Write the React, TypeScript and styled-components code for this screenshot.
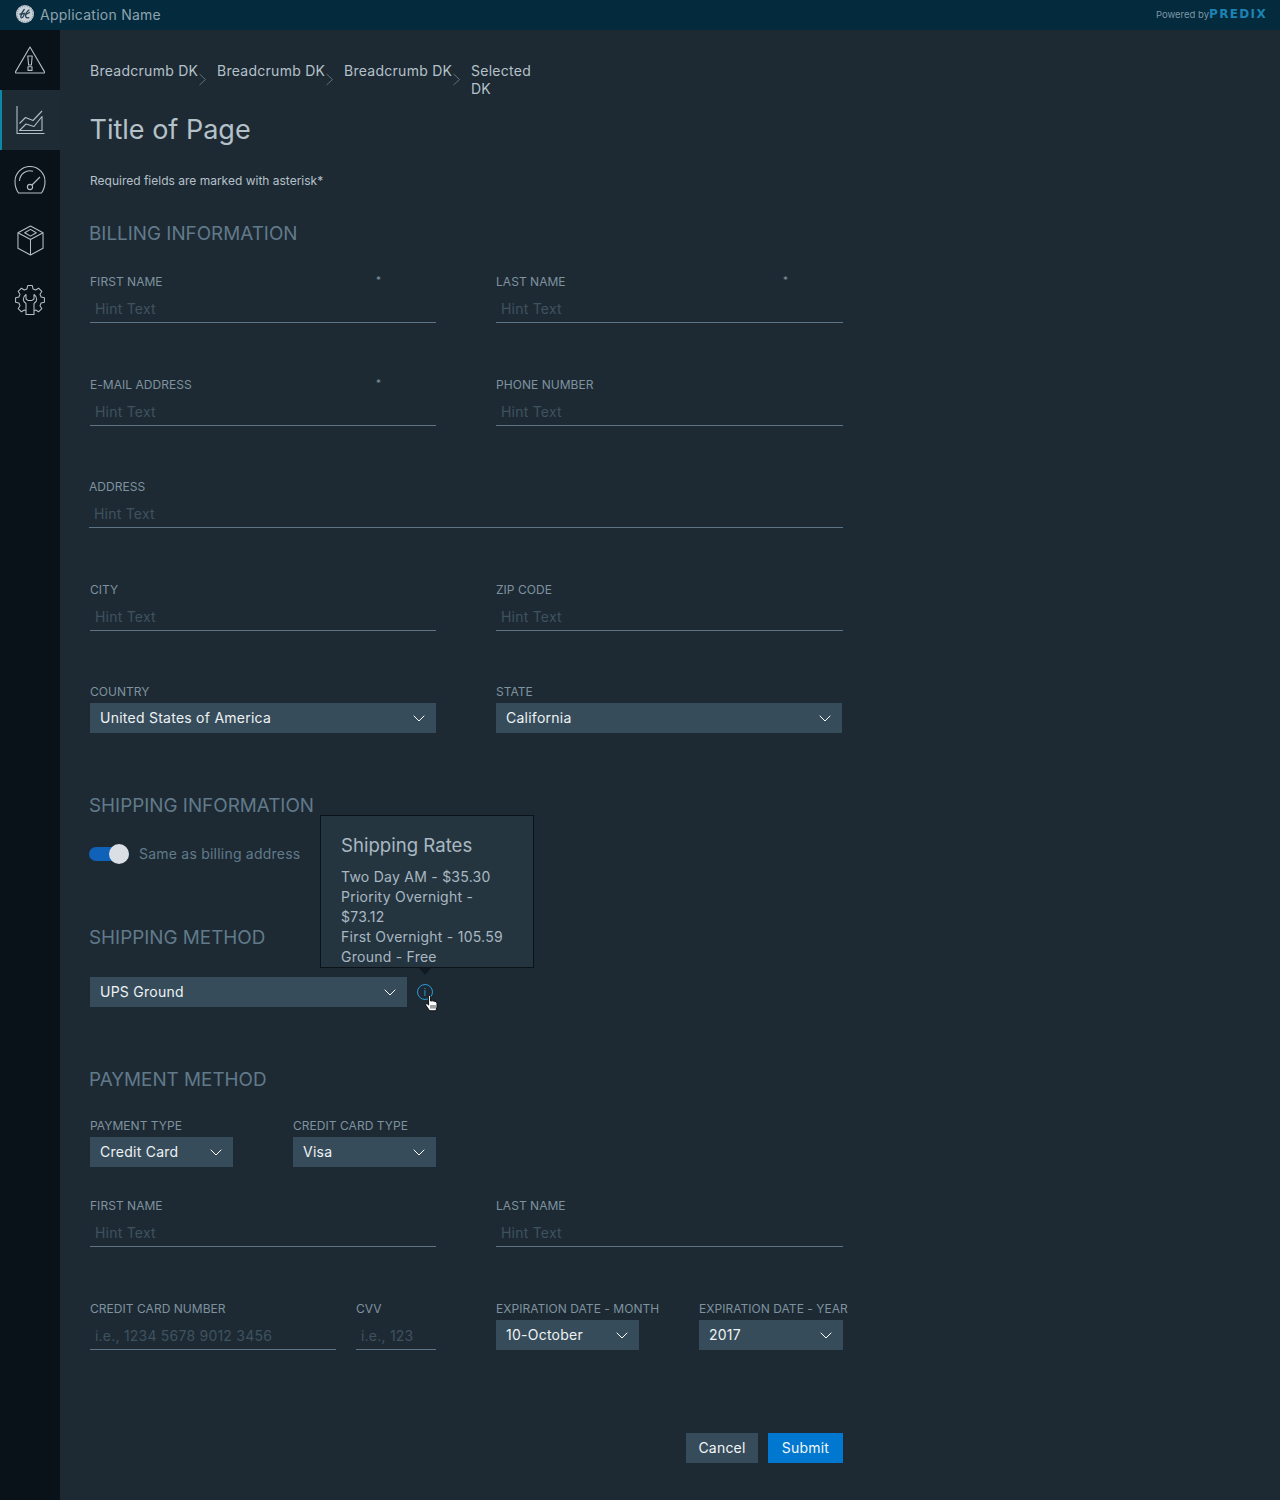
import { FC } from "react";
import styled, { createGlobalStyle } from "styled-components";

const GlobalStyle = createGlobalStyle`
  * { box-sizing: border-box; }
  html, body { margin: 0; padding: 0; background: #1d2a34; }
  body { font-family: "Inter", "Liberation Sans", sans-serif; -webkit-font-smoothing: antialiased; }
`;

const gearPath = (() => {
  const teeth = 8;
  const pts: string[] = [];
  const step = (2 * Math.PI) / teeth;
  const p = (r: number, t: number) =>
    `${(15 + r * Math.cos(t)).toFixed(2)} ${(15 + r * Math.sin(t)).toFixed(2)}`;
  for (let i = 0; i < teeth; i++) {
    const a = i * step - Math.PI / 2;
    pts.push(p(11.5, a - step * 0.34), p(14.6, a - step * 0.2), p(14.6, a + step * 0.2), p(11.5, a + step * 0.34));
  }
  return `M${pts.join("L")}Z`;
})();

const AlertIcon = () => (
  <svg width="30" height="28" viewBox="0 0 30 28" fill="none" stroke="#b4bec5" strokeWidth="1.1" strokeLinejoin="round">
    <path d="M15 1 L29.4 25.6 Q30 27 28.6 27 L1.4 27 Q0 27 0.6 25.6 Z" />
    <path d="M12.8 10 H17.2 L16.4 19 H13.6 Z" />
    <rect x="13" y="20.8" width="4" height="3.6" />
  </svg>
);

const ChartIcon = () => (
  <svg width="30" height="30" viewBox="0 0 30 30" fill="none" stroke="#b4bec5" strokeWidth="1.1" strokeLinejoin="round">
    <path d="M2 1 V28.5 H29.5" />
    <path d="M4.5 18.5 L10.5 12.5 L18 15.5 L27 6" />
    <path d="M4.5 25.5 L11 19 L19 21.5 L27 11.5 V25.5 Z" />
  </svg>
);

const GaugeIcon = () => (
  <svg width="32" height="28" viewBox="0 0 32 28" fill="none" stroke="#b4bec5" strokeWidth="1.1" strokeLinejoin="round">
    <path d="M4.5 27 H27.5 Q31 22 31 15.5 A15 15 0 0 0 1 15.5 Q1 22 4.5 27 Z" />
    <path d="M5.5 15 A10.5 10.5 0 0 1 19 5.2" />
    <circle cx="16" cy="21" r="2.6" />
    <path d="M18 19 L26 11" />
  </svg>
);

const CubeIcon = () => (
  <svg width="27" height="31" viewBox="0 0 28 32" fill="none" stroke="#b4bec5" strokeWidth="1.1" strokeLinejoin="round">
    <path d="M14 1 L27 8 V24 L14 31 L1 24 V8 Z" />
    <path d="M1 8 L14 15 L27 8" />
    <path d="M14 15 V31" />
    <path d="M14 4.5 L20 8 L14 11.5 L8 8 Z" />
  </svg>
);

const GearIcon = () => (
  <svg width="30" height="30" viewBox="0 0 30 30" fill="none" stroke="#b4bec5" strokeWidth="1.05" strokeLinejoin="round">
    <path d={gearPath} />
    <path
      d="M11 9.5 Q8.3 11.5 8.3 14.2 Q8.3 17 11 18.5 V29.6 H19 V18.5 Q21.7 17 21.7 14.2 Q21.7 11.5 19 9.5 V14 L17 15.4 H13 L11 14 Z"
      fill="#0a1219"
    />
  </svg>
);

const Chevron = () => (
  <svg width="12" height="7" viewBox="0 0 12 7" fill="none" stroke="#ffffff" strokeWidth="1">
    <path d="M0.7 0.7 L6 6 L11.3 0.7" />
  </svg>
);

const CrumbArrow = () => (
  <svg width="9" height="13" viewBox="0 0 9 13" fill="none" stroke="#5d6f7b" strokeWidth="1">
    <path d="M1.5 1 L7.5 6.5 L1.5 12" />
  </svg>
);

const GeLogo = () => (
  <svg width="18" height="18" viewBox="0 0 18 18">
    <circle cx="9" cy="9" r="9" fill="#c9d2d8" />
    <g fill="none" stroke="#27404f" strokeWidth="1.3" strokeLinecap="round">
      <path d="M8.2 4.5 Q5.2 8 4.8 11.5 Q4.8 13.5 6.4 12.5 Q8 11 8.4 8.5" />
      <path d="M3.8 9.2 Q6.5 8.6 8.4 8.5" />
      <path d="M13 5 Q9.8 7 9.6 10.8 Q9.8 13.6 12.8 12.6" />
      <path d="M10 9 Q12 8.6 13.4 7.4" />
    </g>
    <circle cx="9" cy="9" r="7.8" fill="none" stroke="#27404f" strokeWidth="0.5" strokeDasharray="1 1.4" />
  </svg>
);

const HandCursor = () => (
  <svg width="13" height="17" viewBox="0 0 13 17">
    <path
      d="M3.6 1.6 Q3.6 0.5 4.6 0.5 Q5.6 0.5 5.6 1.6 V6 Q7.6 5.6 9 6.1 Q11.8 6.6 12 8 V12 L11 15.8 H4.6 L1 10.6 Q0.2 9.2 1.4 8.8 Q2.4 8.6 3.6 10 Z"
      fill="#ffffff"
      stroke="#0b0f13"
      strokeWidth="1"
      strokeLinejoin="round"
    />
    <path d="M6 10 V13.6 M8 10 V13.6 M10 10 V13.6" stroke="#0b0f13" strokeWidth="0.8" />
  </svg>
);

const Page = styled.div`
  width: 1280px;
  height: 1500px;
  display: flex;
  flex-direction: column;
  overflow: hidden;
`;

const TopBar = styled.header`
  height: 30px;
  flex: none;
  display: flex;
  align-items: center;
  justify-content: space-between;
  padding: 0 13px 2px 16px;
  background: #032a3d;
`;

const Brand = styled.div`
  display: flex;
  align-items: center;
  gap: 6px;
  font-size: 14px;
  letter-spacing: 0.25px;
  color: #8fa3ae;
`;

const Powered = styled.div`
  display: flex;
  align-items: center;
  font-size: 9.5px;
  color: #7e97a5;
`;

const Predix = styled.span`
  font-family: "DejaVu Sans", sans-serif;
  font-size: 12px;
  font-weight: 700;
  letter-spacing: 1.35px;
  color: #1c84b4;
`;

const Body = styled.div`
  flex: 1;
  display: flex;
  min-height: 0;
`;

const SideNav = styled.nav`
  width: 60px;
  flex: none;
  background: #0a1219;
`;

const NavItem = styled.div<{ $active?: boolean }>`
  height: 60px;
  display: flex;
  align-items: center;
  justify-content: center;
  background: ${({ $active }) => ($active ? "#1e2b35" : "transparent")};
  border-left: ${({ $active }) => ($active ? "2px solid #0b87a8" : "none")};
  padding-right: ${({ $active }) => ($active ? "2px" : "0")};
`;

const Main = styled.main`
  flex: 1;
  background: #1d2a34;
  padding: 32px 0 0 30px;
`;

const Crumbs = styled.div`
  display: flex;
  align-items: flex-start;
  font-size: 14px;
  line-height: 18px;
  letter-spacing: 0.27px;
  color: #b5c1c9;
`;

const Crumb = styled.span`
  width: 108px;
  white-space: nowrap;
`;

const CrumbSep = styled.span`
  width: 19px;
  display: flex;
  padding-top: 11px;
`;

const CrumbLast = styled.span`
  width: 64px;
`;

const Title = styled.h1`
  margin: 14px 0 0 -0.5px;
  font-size: 27px;
  line-height: 36px;
  font-weight: 400;
  color: #b5c1c9;
`;

const Required = styled.p`
  margin: 25px 0 0;
  font-size: 12px;
  line-height: 16px;
  color: #b5c1c9;
`;

const Heading = styled.h2<{ $top: number }>`
  margin: ${({ $top }) => $top}px 0 0 -1px;
  font-size: 18.85px;
  line-height: 24px;
  font-weight: 400;
  color: #617a8a;
`;

const FormWidth = styled.div<{ $top?: number }>`
  width: 753px;
  margin-top: ${({ $top }) => $top ?? 0}px;
`;

const TwoCol = styled(FormWidth)`
  display: grid;
  grid-template-columns: 346px 347px;
  column-gap: 60px;
`;

const FieldBox = styled.div<{ $shift?: boolean }>`
  position: relative;
  margin-left: ${({ $shift }) => ($shift ? "-1px" : "0")};
`;

const Label = styled.div`
  font-size: 12px;
  line-height: 16px;
  letter-spacing: 0.04px;
  white-space: nowrap;
  color: #7f929e;
`;

const Star = styled.span`
  position: absolute;
  top: -2px;
  right: 55px;
  font-size: 10px;
  line-height: 16px;
  color: #7f929e;
`;

const HintInput = styled.div`
  height: 33px;
  padding: 4px 0 0 5px;
  display: flex;
  align-items: center;
  border-bottom: 1px solid #5c7486;
  font-size: 14px;
  letter-spacing: 0.22px;
  color: #3f525f;
`;

const Select = styled.div<{ $inset?: boolean }>`
  height: 30px;
  margin: 3px ${({ $inset }) => ($inset ? "1px" : "0")} 0 0;
  display: flex;
  align-items: center;
  justify-content: space-between;
  padding: 0 11px 2px 10px;
  background: #364c5a;
  font-size: 14px;
  letter-spacing: 0.25px;
  white-space: nowrap;
  color: #eef2f4;
  svg {
    margin-top: 2px;
  }
`;

const MethodSelect = styled(Select)`
  width: 317px;
  margin: 0;
`;

const ToggleRow = styled.div`
  margin: 24px 0 0 -1px;
  display: flex;
  align-items: center;
  gap: 10px;
  height: 24px;
  padding-bottom: 2px;
  font-size: 14px;
  letter-spacing: 0.22px;
  color: #617a8a;
`;

const ToggleTrack = styled.div`
  position: relative;
  width: 40px;
  height: 14px;
  margin-top: 2px;
  border-radius: 7px;
  background: #0f62b8;
`;

const ToggleKnob = styled.div`
  position: absolute;
  right: 0;
  top: -3px;
  width: 20px;
  height: 20px;
  border-radius: 50%;
  background: #d9dfe5;
`;

const MethodRow = styled.div`
  margin-top: 27px;
  display: flex;
  align-items: center;
  gap: 10px;
`;

const InfoWrap = styled.div`
  position: relative;
  width: 16px;
  height: 16px;
`;

const InfoCircle = styled.div`
  width: 16px;
  height: 16px;
  border: 1.2px solid #2c9ad6;
  border-radius: 50%;
  display: flex;
  align-items: center;
  justify-content: center;
  font-size: 10px;
  line-height: 1;
  color: #2c9ad6;
`;

const Cursor = styled.div`
  position: absolute;
  left: 8px;
  top: 11px;
  display: flex;
`;

const Tooltip = styled.div`
  position: absolute;
  left: -97px;
  bottom: 32px;
  width: 214px;
  height: 153px;
  padding: 16px 20px 0;
  background: #253540;
  border: 1px solid #0c1318;
  &::after {
    content: "";
    position: absolute;
    left: 98px;
    bottom: -8px;
    border-left: 6px solid transparent;
    border-right: 6px solid transparent;
    border-top: 7px solid #111a21;
  }
`;

const TipTitle = styled.div`
  font-size: 18.6px;
  line-height: 26px;
  color: #a9b8c2;
`;

const TipBody = styled.div`
  margin-top: 9px;
  font-size: 14px;
  line-height: 20px;
  letter-spacing: 0.25px;
  color: #a9b8c2;
`;

const PayTypes = styled(FormWidth)`
  width: 346px;
  display: grid;
  grid-template-columns: 143px 143px;
  column-gap: 60px;
`;

const CardLeft = styled.div`
  display: grid;
  grid-template-columns: 246px 80px;
  column-gap: 20px;
`;

const CardRight = styled.div`
  display: grid;
  grid-template-columns: 143px 144px;
  column-gap: 60px;
`;

const Actions = styled(FormWidth)`
  display: flex;
  justify-content: flex-end;
  gap: 10px;
`;

const Button = styled.button<{ $primary?: boolean }>`
  width: ${({ $primary }) => ($primary ? "75px" : "72px")};
  height: 30px;
  padding: 0 0 2px;
  border: 0;
  font-family: inherit;
  font-size: 14px;
  letter-spacing: 0.2px;
  color: #f2f6f8;
  background: ${({ $primary }) => ($primary ? "#0078cf" : "#364c5a")};
`;

type TField = {
  label: string;
  hint?: string;
  star?: boolean;
  shift?: boolean;
};
const Field: FC<TField> = ({ label, hint = "Hint Text", star, shift }) => (
  <FieldBox $shift={shift}>
    <Label>{label}</Label>
    {star && <Star>*</Star>}
    <HintInput>{hint}</HintInput>
  </FieldBox>
);

type TDrop = {
  label: string;
  value: string;
  inset?: boolean;
};
const Drop: FC<TDrop> = ({ label, value, inset }) => (
  <FieldBox>
    <Label>{label}</Label>
    <Select $inset={inset}>
      {value}
      <Chevron />
    </Select>
  </FieldBox>
);

const App: FC = () => {
  return (
    <Page>
      <GlobalStyle />
      <TopBar>
        <Brand>
          <GeLogo />
          Application Name
        </Brand>
        <Powered>
          Powered by
          <Predix>PREDIX</Predix>
        </Powered>
      </TopBar>
      <Body>
        <SideNav>
          <NavItem><AlertIcon /></NavItem>
          <NavItem $active><ChartIcon /></NavItem>
          <NavItem><GaugeIcon /></NavItem>
          <NavItem><CubeIcon /></NavItem>
          <NavItem><GearIcon /></NavItem>
        </SideNav>
        <Main>
          <Crumbs>
            <Crumb>Breadcrumb DK</Crumb>
            <CrumbSep><CrumbArrow /></CrumbSep>
            <Crumb>Breadcrumb DK</Crumb>
            <CrumbSep><CrumbArrow /></CrumbSep>
            <Crumb>Breadcrumb DK</Crumb>
            <CrumbSep><CrumbArrow /></CrumbSep>
            <CrumbLast>Selected DK</CrumbLast>
          </Crumbs>
          <Title>Title of Page</Title>
          <Required>Required fields are marked with asterisk*</Required>

          <Heading $top={33}>BILLING INFORMATION</Heading>
          <TwoCol $top={28}>
            <Field label="FIRST NAME" star />
            <Field label="LAST NAME" star />
          </TwoCol>
          <TwoCol $top={54}>
            <Field label="E-MAIL ADDRESS" star />
            <Field label="PHONE NUMBER" />
          </TwoCol>
          <FormWidth $top={53}>
            <Field label="ADDRESS" shift />
          </FormWidth>
          <TwoCol $top={54}>
            <Field label="CITY" />
            <Field label="ZIP CODE" />
          </TwoCol>
          <TwoCol $top={53}>
            <Drop label="COUNTRY" value="United States of America" />
            <Drop label="STATE" value="California" inset />
          </TwoCol>

          <Heading $top={61}>SHIPPING INFORMATION</Heading>
          <ToggleRow>
            <ToggleTrack><ToggleKnob /></ToggleTrack>
            Same as billing address
          </ToggleRow>

          <Heading $top={60}>SHIPPING METHOD</Heading>
          <MethodRow>
            <MethodSelect>
              UPS Ground
              <Chevron />
            </MethodSelect>
            <InfoWrap>
              <Tooltip>
                <TipTitle>Shipping Rates</TipTitle>
                <TipBody>
                  Two Day AM - $35.30
                  <br />
                  Priority Overnight - $73.12
                  <br />
                  First Overnight - 105.59
                  <br />
                  Ground - Free
                </TipBody>
              </Tooltip>
              <InfoCircle>i</InfoCircle>
              <Cursor><HandCursor /></Cursor>
            </InfoWrap>
          </MethodRow>

          <Heading $top={61}>PAYMENT METHOD</Heading>
          <PayTypes $top={26}>
            <Drop label="PAYMENT TYPE" value="Credit Card" />
            <Drop label="CREDIT CARD TYPE" value="Visa" />
          </PayTypes>
          <TwoCol $top={31}>
            <Field label="FIRST NAME" />
            <Field label="LAST NAME" />
          </TwoCol>
          <TwoCol $top={54}>
            <CardLeft>
              <Field label="CREDIT CARD NUMBER" hint="i.e., 1234 5678 9012 3456" />
              <Field label="CVV" hint="i.e., 123" />
            </CardLeft>
            <CardRight>
              <Drop label="EXPIRATION DATE - MONTH" value="10-October" />
              <Drop label="EXPIRATION DATE - YEAR" value="2017" />
            </CardRight>
          </TwoCol>
          <Actions $top={83}>
            <Button>Cancel</Button>
            <Button $primary>Submit</Button>
          </Actions>
        </Main>
      </Body>
    </Page>
  );
};

export default App;
